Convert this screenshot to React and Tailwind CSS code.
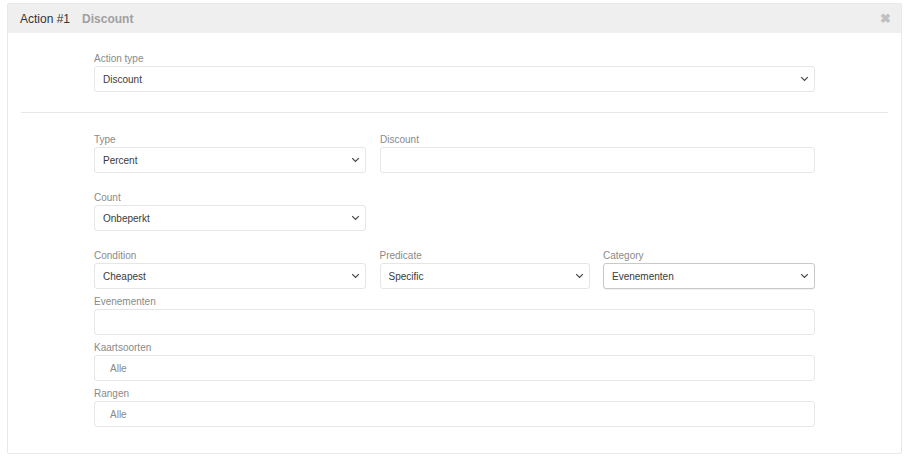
import React from 'react';

const Chevron = () => (
  <svg width="9" height="6" viewBox="0 0 9 6" className="absolute right-[5px] top-1/2 -translate-y-1/2">
    <path d="M1.2 1.2l3.3 3.3 3.3-3.3" fill="none" stroke="#444" strokeWidth="1.2" />
  </svg>
);

function Label({ children }) {
  return <div className="h-[13px] mb-[1px] text-[10px] leading-[13px] text-[#8a8a8a]">{children}</div>;
}

function Select({ value, focused }) {
  return (
    <div
      className={`relative h-[26px] rounded-[3px] border bg-white flex items-center pl-[8px] text-[10px] text-[#3a3a3a] ${
        focused ? 'border-[#c9c9c9] shadow-[0_1px_1px_rgba(0,0,0,0.06)]' : 'border-[#e6e6e6]'
      }`}
    >
      {value}
      <Chevron />
    </div>
  );
}

function Input({ value }) {
  return (
    <div className="h-[26px] rounded-[3px] border border-[#e6e6e6] bg-white flex items-center pl-[15px] text-[10px] text-[#888]">
      {value}
    </div>
  );
}

function Field({ label, children, className = '' }) {
  return (
    <div className={className}>
      <Label>{label}</Label>
      {children}
    </div>
  );
}

export default function App() {
  return (
    <div className="w-[904px] h-[458px] bg-white pt-[3px] pl-[7px] pr-[2px] font-['Liberation_Sans',Arial,sans-serif]">
      <div className="border border-[#e8e8e8] rounded-[2px] h-[451px]">
        <div className="h-[29px] bg-[#efefef] flex items-center pl-[12px] pr-[10px] text-[12px]">
          <span className="text-[#333]">Action #1</span>
          <span className="ml-[12px] font-bold text-[#a0a0a0]">Discount</span>
          <span className="ml-auto text-[#c0c0c0] font-bold text-[13px] leading-none">✖</span>
        </div>
        <div className="px-[13px] pt-[19px]">
          <div className="w-[721px] mx-auto">
            <Field label="Action type">
              <Select value="Discount" />
            </Field>
          </div>
          <div className="h-px bg-[#e8e8e8] mt-[20px] mb-[20px]" />
          <div className="w-[721px] mx-auto">
            <div className="grid grid-cols-[272px_435px] gap-x-[14px]">
              <Field label="Type">
                <Select value="Percent" />
              </Field>
              <Field label="Discount">
                <div className="h-[26px] rounded-[3px] border border-[#e6e6e6] bg-white" />
              </Field>
            </div>
            <div className="mt-[18px] w-[272px]">
              <Field label="Count">
                <Select value="Onbeperkt" />
              </Field>
            </div>
            <div className="mt-[18px] grid grid-cols-[272px_210px_212px] gap-x-[13.5px]">
              <Field label="Condition">
                <Select value="Cheapest" />
              </Field>
              <Field label="Predicate">
                <Select value="Specific" />
              </Field>
              <Field label="Category">
                <Select value="Evenementen" focused />
              </Field>
            </div>
            <Field label="Evenementen" className="mt-[6px]">
              <Input value="" />
            </Field>
            <Field label="Kaartsoorten" className="mt-[6px]">
              <Input value="Alle" />
            </Field>
            <Field label="Rangen" className="mt-[6px]">
              <Input value="Alle" />
            </Field>
          </div>
        </div>
      </div>
    </div>
  );
}
